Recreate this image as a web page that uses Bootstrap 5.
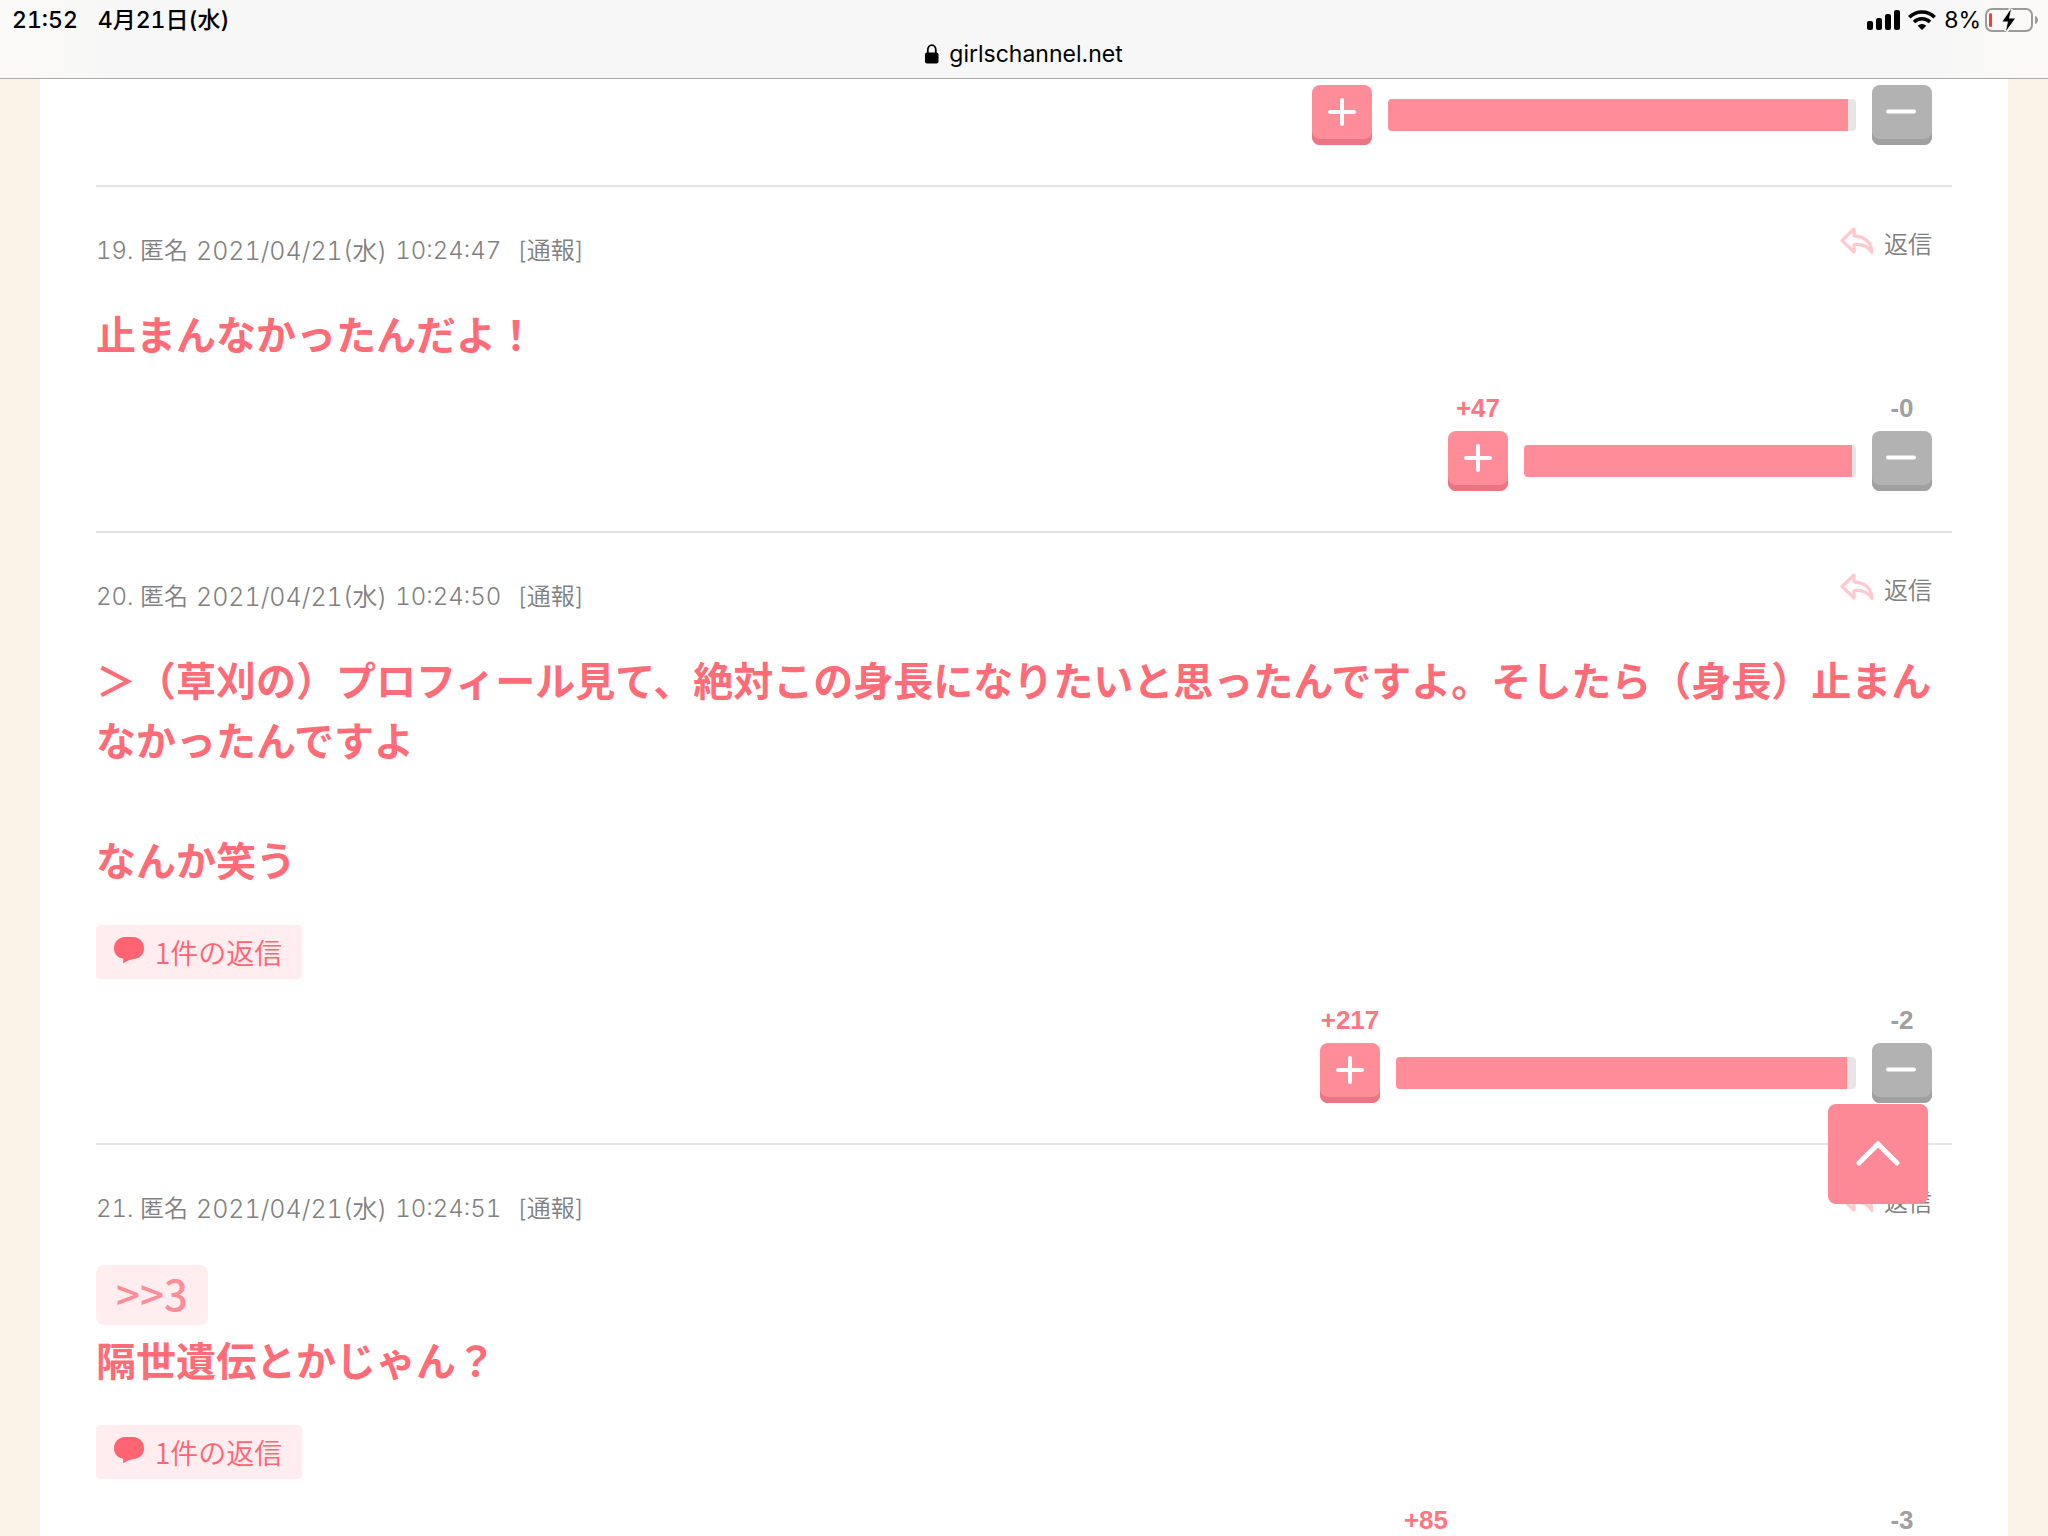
<!DOCTYPE html>
<html lang="ja">
<head>
<meta charset="utf-8">
<meta name="viewport" content="width=device-width, initial-scale=1">
<title>girlschannel.net</title>
<link href="https://cdn.jsdelivr.net/npm/bootstrap@5.3.0/dist/css/bootstrap.min.css" rel="stylesheet">
<style>
  :root { --pink: #ff8c99; --pink-deep: #eb7682; --pink-text: #ff6b76; --pink-soft: #ffedef; }
  body { background: #fbf2e8; color: #808080; font-family: Inter, "Noto Sans CJK JP", sans-serif; }
  a { text-decoration: none; }

  .topbar { background: linear-gradient(90deg, #fbfaf8, #f7f7f7 120px, #f7f7f7 calc(100% - 120px), #fbfaf8); border-bottom: 1px solid #a9a9a9; color: #000; }
  .status-row { height: 40px; padding: 0 9px 0 12px; font-size: 23px; font-weight: 500; font-variant-numeric: tabular-nums; }
  .status-row .clock-gap { gap: 20px; }
  .battery-pct { font-weight: 400; font-variant-numeric: normal; }
  .address-row { height: 38px; padding-bottom: 10px; font-size: 23px; gap: 10px; }

  .page-scroll { min-height: 0; scrollbar-width: none; }
  .sheet { margin: 0 40px; padding: 6px 56px 0; min-height: 100%; }
  .comment { border-bottom: 2px solid #e3e3e3; padding-bottom: 40px; }
  .comment-head { padding-top: 40px; margin-bottom: 34px; line-height: 36px; font-size: 24px; font-weight: 350; }
  .comment-meta { padding-top: 6px; gap: 8px; font-variant-numeric: tabular-nums; }
  .comment-meta .posted-on { font-size: 25px; }
  .comment-meta .report-link { margin-left: 8px; }
  .comment-head a { color: #808080; }
  .reply-link { gap: 10px; margin-right: 20px; }
  .comment-text { font-family: "Noto Sans CJK JP", sans-serif; font-size: 40px; line-height: 60px; font-weight: 700; color: var(--pink-text); }
  .quote-link { display: block; width: fit-content; height: 60px; padding: 0 20px; margin: 4px 0; border-radius: 8px; background: var(--pink-soft); color: var(--pink); font-weight: 500; font-size: 42px; line-height: 56px; }
  .replies-btn { height: 54px; margin: 36px 0 -4px; padding: 0 20px 0 18px; gap: 11px; border: 0; border-radius: 4px; background: var(--pink-soft); color: #ff6472; font-family: "Noto Sans CJK JP", sans-serif; font-weight: 350; font-size: 28px; line-height: 54px; }

  .votes { gap: 16px; margin-right: 20px; padding-top: 30px; }
  .vote-side { width: 60px; gap: 8px; }
  .vote-count { font-family: "Liberation Sans", sans-serif; font-size: 26px; line-height: 30px; font-weight: 700; }
  .vote-plus .vote-count { color: #ff7682; }
  .vote-minus .vote-count { color: #a0a0a0; }
  .vote-btn { width: 60px; height: 60px; padding: 0 0 6px; border: 0; border-radius: 8px; }
  .vote-plus .vote-btn { background: var(--pink); box-shadow: inset 0 -6px 0 var(--pink-deep); }
  .vote-minus .vote-btn { background: #b2b2b2; box-shadow: inset 0 -6px 0 #a0a0a0; }
  .vote-bar { height: 32px; margin-bottom: 14px; border-radius: 4px; background: #e6e6e6; }
  .vote-fill { background: var(--pink); }

  .to-top { right: 120px; bottom: 332px; width: 100px; height: 100px; border: 0; border-radius: 8px; background: #fd8996; }
</style>
<script src="https://cdn.jsdelivr.net/npm/bootstrap@5.3.0/dist/js/bootstrap.bundle.min.js"></script>
</head>
<body class="vh-100 d-flex flex-column overflow-hidden">

<svg class="d-none" aria-hidden="true">
  <symbol id="plus" viewBox="0 0 28 28"><path d="M14 2v24M2 14h24" stroke="#fff" stroke-width="4" stroke-linecap="round"/></symbol>
  <symbol id="minus" viewBox="0 0 32 28"><path d="M2 13.500h26" stroke="#fff" stroke-width="4" stroke-linecap="round"/></symbol>
  <symbol id="reply" viewBox="0 0 34 28"><path d="M14 2 2 13.500 14 25v-7.500c8-.8 14 1.500 18 8C31.500 15 24.500 9.500 14 8.800z" fill="none" stroke="#ffc9cf" stroke-width="3.200" stroke-linejoin="round"/></symbol>
  <symbol id="bubble" viewBox="0 0 30 26"><path d="M11 0h8c6.500 0 11 5 11 11.200C30 18 25.500 21.500 19.500 22c-4 .8-7 2.200-9.800 4-.4.200-.7 0-.6-.4l.2-3.800C3.500 20.500 0 17 0 11.200 0 5 4.500 0 11 0z" fill="#ff6472"/></symbol>
</svg>

<header class="topbar flex-shrink-0">
  <div class="status-row d-flex align-items-center justify-content-between">
    <div class="d-flex clock-gap"><span>21:52</span><span>4月21日(水)</span></div>
    <div class="d-flex align-items-center gap-2">
      <svg width="33" height="20" viewBox="0 0 33 20"><rect y="11" width="6" height="9" rx="2"/><rect x="9" y="8" width="6" height="12" rx="2"/><rect x="18" y="4" width="6" height="16" rx="2"/><rect x="27" width="6" height="20" rx="2"/></svg>
      <svg width="28" height="20" viewBox="0 0 28 20" fill="none" stroke="#000" stroke-width="3.600"><path d="M1.300 7.300a18 18 0 0 1 25.400 0M6 12a11.500 11.500 0 0 1 16 0"/><path d="M14 20l-4.300-4.300a6.200 6.200 0 0 1 8.600 0z" fill="#000" stroke="none"/></svg>
      <div class="d-flex align-items-center gap-1">
        <span class="battery-pct">8%</span>
        <svg width="54" height="26" viewBox="0 0 54 26"><rect x="1" y="2" width="46" height="22" rx="6" fill="none" stroke="#9b9b9b" stroke-width="2"/><path d="M50 9c4 1 4 7 0 8z" fill="#9b9b9b"/><rect x="4" y="6" width="3" height="14" rx="1.500" fill="#ff3b30"/><path d="M26 2 17.500 14.500h5.500L21 24l9-12.500h-6z" stroke="#f8f8f8" stroke-width="4"/><path d="M26 2 17.500 14.500h5.500L21 24l9-12.500h-6z"/></svg>
      </div>
    </div>
  </div>
  <div class="address-row d-flex align-items-center justify-content-center">
    <svg width="14" height="20" viewBox="0 0 14 20"><rect y="8.500" width="13.500" height="11" rx="2"/><path d="M2.800 9.500V6a4 4.800 0 0 1 8 0v3.500" fill="none" stroke="#000" stroke-width="1.800"/></svg>
    <span>girlschannel.net</span>
  </div>
</header>

<main class="page-scroll flex-grow-1 overflow-auto">
  <div class="sheet bg-white">

    <article class="comment">
      <div class="votes d-flex justify-content-end align-items-end pt-0">
        <div class="vote-side vote-plus"><button class="vote-btn d-flex align-items-center justify-content-center" aria-label="プラス"><svg width="28" height="28"><use href="#plus"/></svg></button></div>
        <div class="vote-bar d-flex overflow-hidden" style="width:468px"><div class="vote-fill" style="width:98.3%"></div></div>
        <div class="vote-side vote-minus"><button class="vote-btn d-flex align-items-center justify-content-center" aria-label="マイナス"><svg width="32" height="28"><use href="#minus"/></svg></button></div>
      </div>
    </article>

    <article class="comment">
      <div class="comment-head d-flex justify-content-between align-items-start">
        <div class="comment-meta d-flex"><span>19. 匿名</span><span class="posted-on">2021/04/21(水)</span><span>10:24:47</span><a href="#" class="report-link">[通報]</a></div>
        <a href="#" class="reply-link d-flex"><svg width="34" height="28"><use href="#reply"/></svg>返信</a>
      </div>
      <div class="comment-text">止まんなかったんだよ！</div>
      <div class="votes d-flex justify-content-end align-items-end">
        <div class="vote-side vote-plus d-flex flex-column align-items-center"><span class="vote-count">+47</span><button class="vote-btn d-flex align-items-center justify-content-center" aria-label="プラス"><svg width="28" height="28"><use href="#plus"/></svg></button></div>
        <div class="vote-bar d-flex overflow-hidden" style="width:332px"><div class="vote-fill" style="width:98.8%"></div></div>
        <div class="vote-side vote-minus d-flex flex-column align-items-center"><span class="vote-count">-0</span><button class="vote-btn d-flex align-items-center justify-content-center" aria-label="マイナス"><svg width="32" height="28"><use href="#minus"/></svg></button></div>
      </div>
    </article>

    <article class="comment">
      <div class="comment-head d-flex justify-content-between align-items-start">
        <div class="comment-meta d-flex"><span>20. 匿名</span><span class="posted-on">2021/04/21(水)</span><span>10:24:50</span><a href="#" class="report-link">[通報]</a></div>
        <a href="#" class="reply-link d-flex"><svg width="34" height="28"><use href="#reply"/></svg>返信</a>
      </div>
      <div class="comment-text">＞（草刈の）プロフィール見て、絶対この身長になりたいと思ったんですよ。そしたら（身長）止まんなかったんですよ<br><br>なんか笑う</div>
      <button class="replies-btn d-flex"><svg class="mt-2 pt-1" width="30" height="38" viewBox="0 0 30 26" preserveAspectRatio="xMidYMin meet"><use href="#bubble" width="30" height="26"/></svg>1件の返信</button>
      <div class="votes d-flex justify-content-end align-items-end">
        <div class="vote-side vote-plus d-flex flex-column align-items-center"><span class="vote-count">+217</span><button class="vote-btn d-flex align-items-center justify-content-center" aria-label="プラス"><svg width="28" height="28"><use href="#plus"/></svg></button></div>
        <div class="vote-bar d-flex overflow-hidden" style="width:460px"><div class="vote-fill" style="width:98.1%"></div></div>
        <div class="vote-side vote-minus d-flex flex-column align-items-center"><span class="vote-count">-2</span><button class="vote-btn d-flex align-items-center justify-content-center" aria-label="マイナス"><svg width="32" height="28"><use href="#minus"/></svg></button></div>
      </div>
    </article>

    <article class="comment">
      <div class="comment-head d-flex justify-content-between align-items-start">
        <div class="comment-meta d-flex"><span>21. 匿名</span><span class="posted-on">2021/04/21(水)</span><span>10:24:51</span><a href="#" class="report-link">[通報]</a></div>
        <a href="#" class="reply-link d-flex"><svg width="34" height="28"><use href="#reply"/></svg>返信</a>
      </div>
      <div class="comment-text d-flex flex-column"><a href="#" class="quote-link">&gt;&gt;3</a><span>隔世遺伝とかじゃん？</span></div>
      <button class="replies-btn d-flex"><svg class="mt-2 pt-1" width="30" height="38" viewBox="0 0 30 26" preserveAspectRatio="xMidYMin meet"><use href="#bubble" width="30" height="26"/></svg>1件の返信</button>
      <div class="votes d-flex justify-content-end align-items-end">
        <div class="vote-side vote-plus d-flex flex-column align-items-center"><span class="vote-count">+85</span><button class="vote-btn d-flex align-items-center justify-content-center" aria-label="プラス"><svg width="28" height="28"><use href="#plus"/></svg></button></div>
        <div class="vote-bar d-flex overflow-hidden" style="width:384px"><div class="vote-fill" style="width:97%"></div></div>
        <div class="vote-side vote-minus d-flex flex-column align-items-center"><span class="vote-count">-3</span><button class="vote-btn d-flex align-items-center justify-content-center" aria-label="マイナス"><svg width="32" height="28"><use href="#minus"/></svg></button></div>
      </div>
    </article>
  </div>
</main>

<button class="to-top position-fixed d-flex align-items-center justify-content-center" aria-label="ページの先頭へ">
  <svg width="46" height="26" viewBox="0 0 46 26" fill="none" stroke="#fff" stroke-width="5" stroke-linecap="round"><path d="M4 22 23 3l19 19"/></svg>
</button>
</body>
</html>
